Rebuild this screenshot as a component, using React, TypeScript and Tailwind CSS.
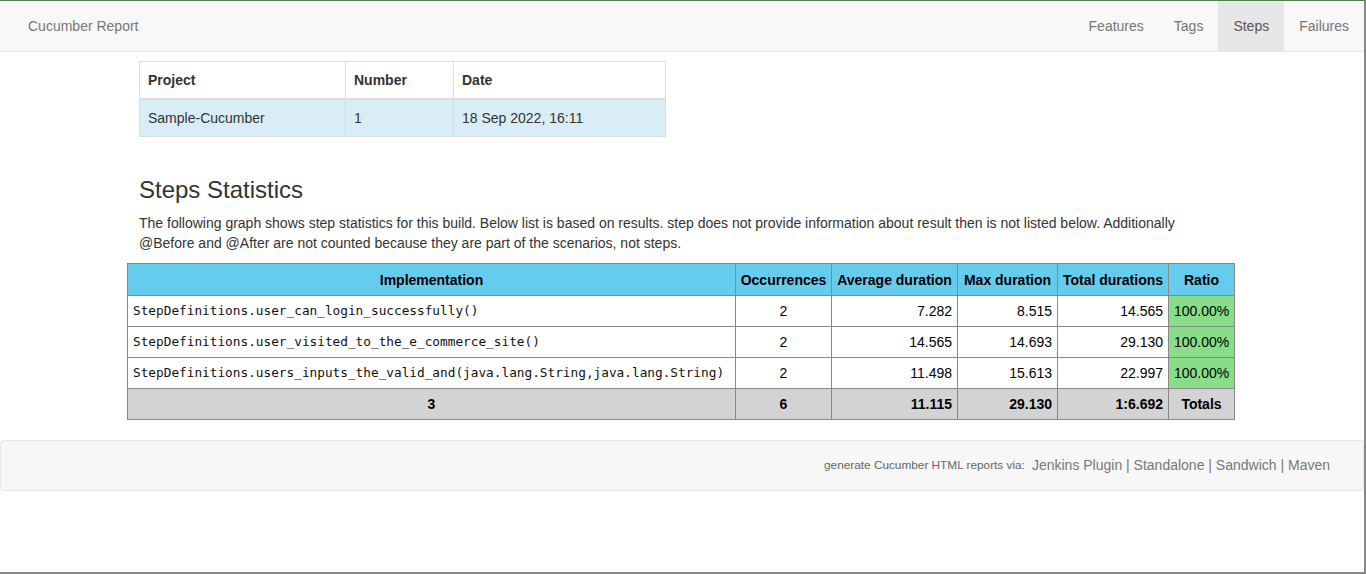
const steps = [
  { impl: "StepDefinitions.user_can_login_successfully()", occ: 2, avg: "7.282", max: "8.515", total: "14.565", ratio: "100.00%" },
  { impl: "StepDefinitions.user_visited_to_the_e_commerce_site()", occ: 2, avg: "14.565", max: "14.693", total: "29.130", ratio: "100.00%" },
  { impl: "StepDefinitions.users_inputs_the_valid_and(java.lang.String,java.lang.String)", occ: 2, avg: "11.498", max: "15.613", total: "22.997", ratio: "100.00%" },
];

const navItems = ["Features", "Tags", "Steps", "Failures"];

function Navbar() {
  return (
    <div className="flex h-[51px] items-stretch justify-between border-b border-[#e7e7e7] bg-[#f8f8f8]">
      <span className="px-[28px] text-[14px] leading-[50px] text-[#777]">Cucumber Report</span>
      <div className="flex">
        {navItems.map((item) => (
          <span
            key={item}
            className={`px-[15px] text-[14px] leading-[50px] ${item === "Steps" ? "bg-[#e7e7e7] text-[#555]" : "text-[#777]"}`}
          >
            {item}
          </span>
        ))}
      </div>
    </div>
  );
}

function BuildInfo() {
  return (
    <table className="w-[527px] border-collapse border border-[#ddd] text-[14px] leading-[20px] text-[#333]">
      <thead>
        <tr>
          <th className="w-[206px] border border-b-2 border-[#ddd] p-2 text-left font-bold">Project</th>
          <th className="w-[108px] border border-b-2 border-[#ddd] p-2 text-left font-bold">Number</th>
          <th className="border border-b-2 border-[#ddd] p-2 text-left font-bold">Date</th>
        </tr>
      </thead>
      <tbody>
        <tr className="bg-[#d9edf7]">
          <td className="border border-[#ddd] p-2">Sample-Cucumber</td>
          <td className="border border-[#ddd] p-2">1</td>
          <td className="border border-[#ddd] p-2">18 Sep 2022, 16:11</td>
        </tr>
      </tbody>
    </table>
  );
}

function StepsTable() {
  const cell = "border border-[#888] px-[5px]";
  const head = "border border-[#888] px-[3px] whitespace-nowrap text-center font-bold";
  return (
    <table className="ml-[-12px] w-[1108px] table-fixed border-collapse border border-[#888] text-[14px] leading-[20px] text-black">
      <colgroup>
        <col className="w-[608px]" />
        <col className="w-[96px]" />
        <col className="w-[126px]" />
        <col className="w-[100px]" />
        <col className="w-[111px]" />
        <col />
      </colgroup>
      <thead>
        <tr className="h-[32px] bg-[#66ccee]">
          <th className={head}>Implementation</th>
          <th className={head}>Occurrences</th>
          <th className={head}>Average duration</th>
          <th className={head}>Max duration</th>
          <th className={head}>Total durations</th>
          <th className={head}>Ratio</th>
        </tr>
      </thead>
      <tbody>
        {steps.map((s) => (
          <tr key={s.impl} className="h-[31px] bg-white">
            <td className={`${cell} whitespace-nowrap font-['DejaVu_Sans_Mono',monospace] text-[12.75px] text-[#111]`}>{s.impl}</td>
            <td className={`${cell} text-center`}>{s.occ}</td>
            <td className={`${cell} text-right`}>{s.avg}</td>
            <td className={`${cell} text-right`}>{s.max}</td>
            <td className={`${cell} text-right`}>{s.total}</td>
            <td className={`${cell} bg-[#88dd88] text-center`}>{s.ratio}</td>
          </tr>
        ))}
      </tbody>
      <tfoot>
        <tr className="h-[31px] bg-[#d3d3d3] font-bold">
          <td className={`${cell} text-center`}>3</td>
          <td className={`${cell} text-center`}>6</td>
          <td className={`${cell} text-right`}>11.115</td>
          <td className={`${cell} text-right`}>29.130</td>
          <td className={`${cell} text-right`}>1:6.692</td>
          <td className={`${cell} text-center`}>Totals</td>
        </tr>
      </tfoot>
    </table>
  );
}

function Footer() {
  return (
    <div className="mt-[20px] flex h-[51px] items-center justify-end rounded-[4px] border border-[#e7e7e7] bg-[#f7f7f7] pr-[33px] text-[#777]">
      <span className="text-[11.8px] text-[#666]">generate Cucumber HTML reports via:</span>
      <span className="ml-[7px] text-[14px]">Jenkins Plugin | Standalone | Sandwich | Maven</span>
    </div>
  );
}

export default function App() {
  return (
    <div className="box-border h-[574px] w-[1366px] overflow-hidden border-t border-r-2 border-b-2 border-t-[#4c7f4c] border-r-[#888] border-b-[#888] bg-white font-['Liberation_Sans',Arial,sans-serif] text-[#333]">
      <Navbar />
      <div className="ml-[139px] w-[1086px]">
        <div className="mt-[9px]">
          <BuildInfo />
        </div>
        <h3 className="mt-[40px] mb-[10px] text-[24px] leading-[1.1] font-medium text-[#333]">Steps Statistics</h3>
        <p className="mb-[10px] text-[14px] leading-[20px] text-[#333]">
          The following graph shows step statistics for this build. Below list is based on results. step does not provide information about result then is not listed below. Additionally @Before and @After are not counted because they are part of the scenarios, not steps.
        </p>
        <StepsTable />
      </div>
      <Footer />
    </div>
  );
}
